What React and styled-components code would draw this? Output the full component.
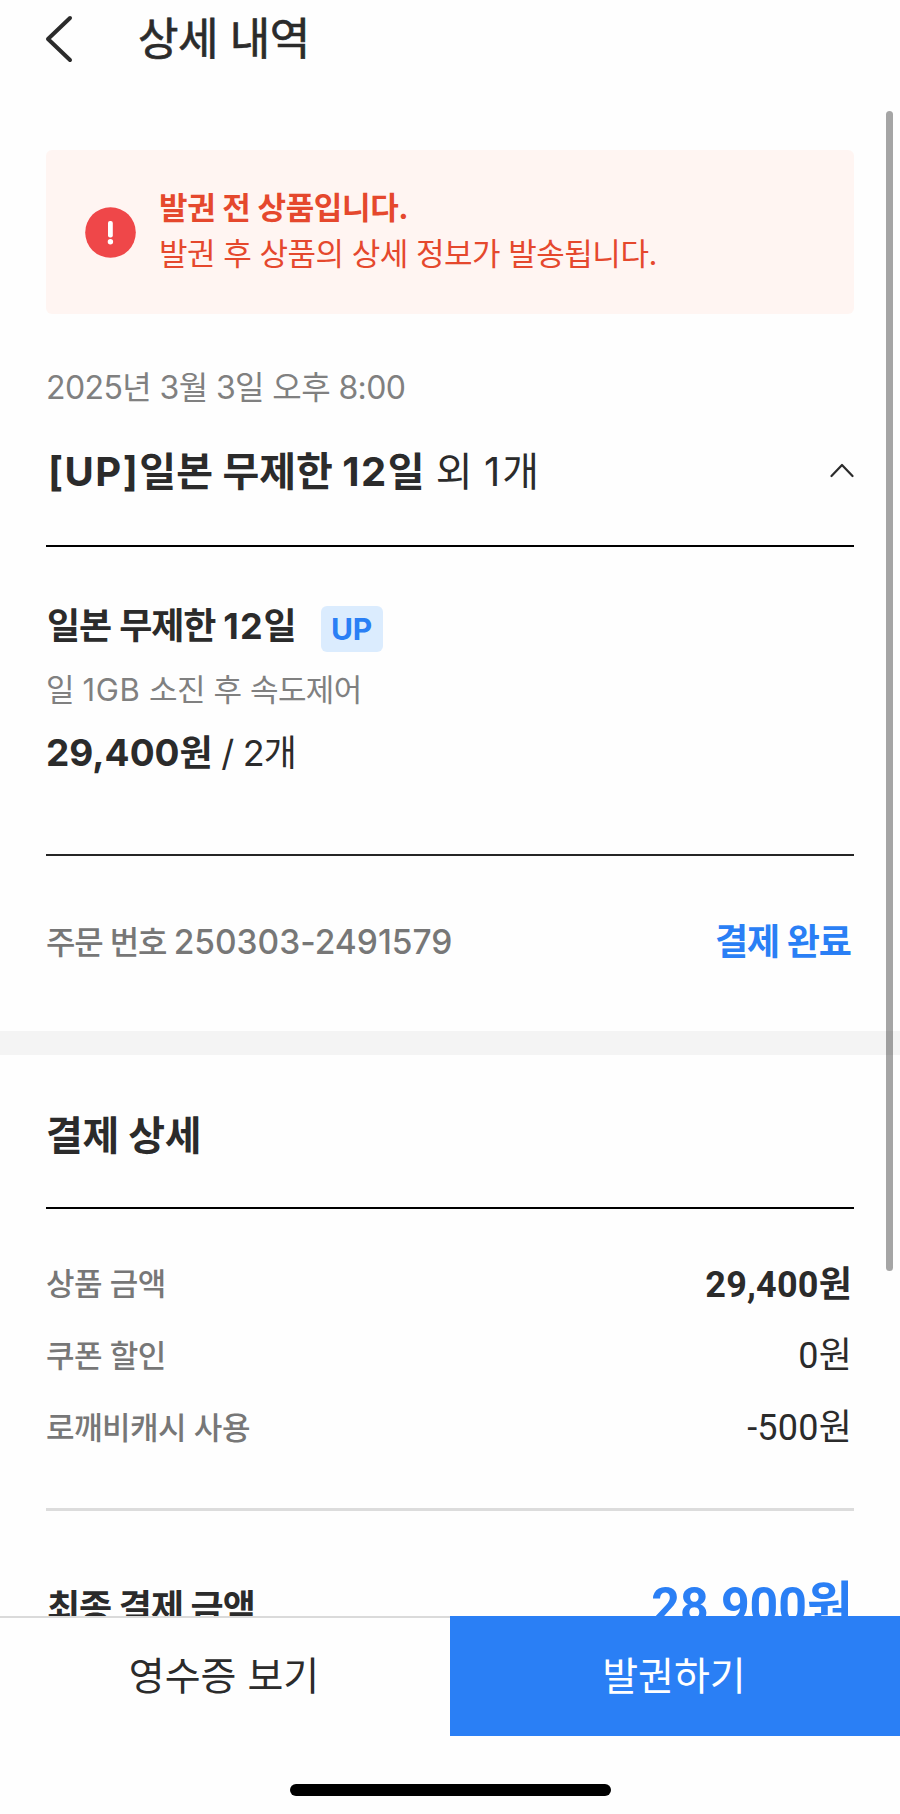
import React from 'react';
import styled, { createGlobalStyle } from 'styled-components';

const GlobalStyle = createGlobalStyle`
  * {
    box-sizing: border-box;
  }

  body {
    margin: 0;
    background: #fefefe;
    color: #2b2b2b;
    font-family: Inter, 'Noto Sans CJK KR', sans-serif;
  }
`;

// Styling Screen

const Screen = styled.div`
  position: relative;
  width: 900px;
  height: 1814px;
  overflow: hidden;
  white-space: nowrap;
`;

// Latin letters and digits are tracked wider than the Korean text

const Num = styled.span`
  font-size: ${(props) => (props.$size ? `${props.$size}px` : 'inherit')};
  letter-spacing: ${(props) => props.$track ?? 1}px;
`;

// Styling Header

const Header = styled.header`
  display: flex;
  align-items: center;
  height: 78px;
  padding: 0 44px;
`;

const Title = styled.h1`
  margin: 0 0 0 64px;
  font-size: 44px;
  font-weight: 400;
  line-height: 78px;
  letter-spacing: -0.5px;
  -webkit-text-stroke: 0.7px #2b2b2b;
`;

const BackIcon = styled.svg`
  width: 30px;
  height: 50px;
`;

// Styling Alert

const Alert = styled.section`
  display: flex;
  align-items: center;
  gap: 23px;
  height: 164px;
  margin: 72px 46px 0;
  padding: 0 39px;
  border-radius: 6px;
  background: #fff5f2;
  color: #e5482d;
`;

const AlertIcon = styled.svg`
  width: 51px;
  height: 51px;
`;

const AlertBody = styled.div`
  padding-bottom: 3px;
`;

const AlertText = styled.p`
  margin: 0;
  font-size: 31px;
  font-weight: ${(props) => (props.$bold ? 700 : 400)};
  line-height: 46px;
  letter-spacing: ${(props) => (props.$bold ? '-0.35px' : '-0.5px')};
`;

// Styling Order

const Order = styled.section`
  padding: 52px 46px 0;
`;

const OrderDate = styled.div`
  color: #808080;
  font-size: 32px;
  line-height: 44px;
  letter-spacing: -0.6px;
`;

const OrderTitle = styled.div`
  display: flex;
  align-items: center;
  justify-content: space-between;
  height: 137px;
  padding: 0 0 11px 2px;
  border-bottom: 2px solid #000;
  font-size: 40px;
  line-height: 56px;

  b {
    font-weight: 700;
  }
`;

const FoldIcon = styled.svg`
  width: 24px;
  height: 15px;
  margin-bottom: 4px;
`;

// Styling Product

const Product = styled.div`
  height: 309px;
  padding-top: 59px;
  border-bottom: 2px solid #252525;
`;

const ProductName = styled.div`
  display: flex;
  align-items: flex-start;
  gap: 25px;
  height: 46px;
  padding-left: 1px;
  font-size: 36px;
  font-weight: 700;
  line-height: 41px;
  letter-spacing: -1.1px;
  word-spacing: 0.7px;
`;

const Badge = styled.span`
  width: 62px;
  height: 46px;
  border-radius: 6px;
  background: #dbecfe;
  color: #2a7ff5;
  font-size: 30px;
  font-weight: 700;
  line-height: 46px;
  letter-spacing: 0;
  text-align: center;
`;

const ProductInfo = styled.div`
  margin-top: 16px;
  color: #808080;
  font-size: 31px;
  line-height: 44px;
  letter-spacing: -0.6px;
  word-spacing: 0.5px;
`;

const ProductPrice = styled.div`
  margin-top: 19px;
  font-size: 36px;
  line-height: 44px;
  letter-spacing: -0.8px;

  b {
    font-weight: 700;
  }
`;

// Styling OrderNumber

const OrderNumber = styled.div`
  display: flex;
  align-items: center;
  justify-content: space-between;
  height: 175px;
  padding: 0 3px 7px 0;
  color: #777;
  font-size: 32px;
  font-weight: 500;
  letter-spacing: -1.2px;
`;

const Status = styled.span`
  padding-bottom: 3px;
  color: #2a7ff5;
  font-size: 36px;
  font-weight: 700;
  letter-spacing: -1px;
`;

const Divider = styled.div`
  height: 24px;
  background: #f4f4f4;
`;

// Styling Payment

const Payment = styled.section`
  padding: 0 46px;
`;

const PaymentTitle = styled.h2`
  height: 154px;
  margin: 0;
  padding-top: 53px;
  border-bottom: 2px solid #000;
  font-size: 40px;
  font-weight: 700;
  line-height: 56px;
  letter-spacing: -0.3px;
`;

const PaymentList = styled.div`
  height: 302px;
  padding-top: 36px;
  border-bottom: 3px solid #dcdcdc;
`;

const PaymentRow = styled.div`
  display: flex;
  align-items: center;
  justify-content: space-between;
  height: 72px;
  padding-right: 2px;
`;

const Label = styled.span`
  color: #777;
  font-size: 31px;
  font-weight: 500;
  letter-spacing: -0.5px;
`;

const Amount = styled.span`
  padding-bottom: ${(props) => (props.$bold ? 0 : 2)}px;
  font-family: Roboto, 'Noto Sans CJK KR', sans-serif;
  font-size: 36px;
  font-weight: ${(props) => (props.$bold ? 700 : 400)};
  letter-spacing: 0.2px;
`;

const TotalRow = styled.div`
  display: flex;
  justify-content: space-between;
  padding: 64px 1px 0 1px;
  font-size: 36px;
  font-weight: 700;
  line-height: 66px;
  letter-spacing: -1px;
`;

const Total = styled.span`
  color: #2a7ff5;
  font-family: Roboto, 'Noto Sans CJK KR', sans-serif;
  font-size: 50px;
  line-height: 62px;
  letter-spacing: 0;
`;

// Styling BottomBar

const BottomBar = styled.footer`
  position: absolute;
  left: 0;
  right: 0;
  bottom: 0;
  display: flex;
  flex-direction: column;
  align-items: center;
  height: 198px;
  background: #fefefe;
`;

const Buttons = styled.div`
  display: flex;
  width: 100%;
  height: 120px;
`;

const Button = styled.button`
  flex: 1;
  padding: 0 2px 9px 0;
  border: none;
  border-top: 2px solid ${(props) => (props.$primary ? '#2a7ff5' : '#dadada')};
  background: ${(props) => (props.$primary ? '#2a7ff5' : '#fefefe')};
  color: ${(props) => (props.$primary ? '#fff' : '#2b2b2b')};
  font-family: inherit;
  font-size: 39px;
`;

const HomeIndicator = styled.div`
  width: 321px;
  height: 12px;
  margin-top: 48px;
  border-radius: 6px;
  background: #000;
`;

const ScrollThumb = styled.div`
  position: absolute;
  top: 111px;
  right: 7px;
  width: 7px;
  height: 1160px;
  border-radius: 4px;
  background: rgba(0, 0, 0, 0.35);
`;

const payments = [
  { label: '상품 금액', amount: '29,400원', bold: true },
  { label: '쿠폰 할인', amount: '0원' },
  { label: '로깨비캐시 사용', amount: '-500원' },
];

const App = () => {
  return (
    <Screen>
      <GlobalStyle />

      <Header>
        <BackIcon viewBox="0 0 30 50" fill="none" stroke="#2b2b2b" strokeWidth="4" strokeLinecap="round" strokeLinejoin="round">
          <path d="M26 4 L4 25 L26 46" />
        </BackIcon>
        <Title>상세 내역</Title>
      </Header>

      <Alert>
        <AlertIcon viewBox="0 0 51 51">
          <circle cx="25.5" cy="25.5" r="25.3" fill="#ef4749" />
          <rect x="23" y="14" width="4.8" height="16.5" rx="2" fill="#fff" />
          <circle cx="25.4" cy="34.7" r="2.7" fill="#fff" />
        </AlertIcon>
        <AlertBody>
          <AlertText $bold>발권 전 상품입니다.</AlertText>
          <AlertText>발권 후 상품의 상세 정보가 발송됩니다.</AlertText>
        </AlertBody>
      </Alert>

      <Order>
        <OrderDate>2025년 3월 3일 오후 8:00</OrderDate>
        <OrderTitle>
          <span><b><Num $track={1.5}>[UP]</Num>일본 무제한 <Num $track={1.5}>12</Num>일</b> 외 <Num $track={2}>1</Num>개</span>
          <FoldIcon viewBox="0 0 24 15" fill="none" stroke="#2b2b2b" strokeWidth="2.2" strokeLinecap="round" strokeLinejoin="round">
            <path d="M1.5 13 L12 2 L22.5 13" />
          </FoldIcon>
        </OrderTitle>

        <Product>
          <ProductName>
            <span>일본 무제한 <Num>12</Num>일</span>
            <Badge>UP</Badge>
          </ProductName>
          <ProductInfo>일 <Num $track={0.6}>1GB</Num> 소진 후 속도제어</ProductInfo>
          <ProductPrice><b><Num $size={37} $track={0}>29,400</Num>원</b> / 2개</ProductPrice>
        </Product>

        <OrderNumber>
          <span>주문 번호 <Num $size={33.5} $track={0}>250303-2491579</Num></span>
          <Status>결제 완료</Status>
        </OrderNumber>
      </Order>

      <Divider />

      <Payment>
        <PaymentTitle>결제 상세</PaymentTitle>
        <PaymentList>
          {payments.map((item) => (
            <PaymentRow key={item.label}>
              <Label>{item.label}</Label>
              <Amount $bold={item.bold}>{item.amount}</Amount>
            </PaymentRow>
          ))}
        </PaymentList>
        <TotalRow>
          <span>최종 결제 금액</span>
          <Total>28,900원</Total>
        </TotalRow>
      </Payment>

      <ScrollThumb />

      <BottomBar>
        <Buttons>
          <Button>영수증 보기</Button>
          <Button $primary>발권하기</Button>
        </Buttons>
        <HomeIndicator />
      </BottomBar>
    </Screen>
  );
};

export default App;
